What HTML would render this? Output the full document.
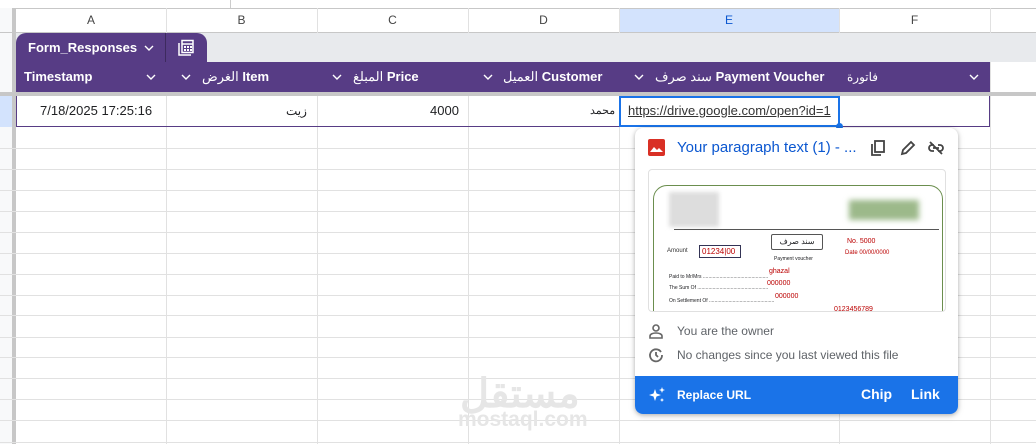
<!DOCTYPE html>
<html><head><meta charset="utf-8"><style>
*{margin:0;padding:0;box-sizing:border-box}
body{width:1036px;height:444px;overflow:hidden;background:#fff;font-family:"Liberation Sans","Noto Sans CJK SC",sans-serif;position:relative;font-size:13px;color:#202124}
.abs{position:absolute}
.vl{position:absolute;top:8px;bottom:0;width:1px;background:#e1e1e1}
.hl{position:absolute;left:0;right:0;height:1px;background:#e1e1e1}
.ch{position:absolute;top:9px;height:23px;line-height:23px;text-align:center;font-size:12px;color:#444}
.hd{position:absolute;top:62px;height:30px;line-height:30px;color:#fff;font-weight:bold;font-size:13px;white-space:nowrap}
.cv{position:absolute;top:74px;width:10px;height:6px}
</style></head><body>
<div class="hl" style="top:8px;background:#c7c7c7"></div>
<div class="abs" style="left:230px;top:0;width:1px;height:8px;background:#ccc"></div>
<div class="abs" style="left:0;top:8px;width:16px;height:436px;background:#f8f9fa"></div>
<div class="abs" style="left:12px;top:8px;width:4px;height:436px;background:#c7c7c7"></div>
<div class="abs" style="left:0;top:96px;width:12px;height:31px;background:#d3e3fd"></div>
<div class="abs" style="left:16px;top:9px;width:1020px;height:23px;background:#fff"></div>
<div class="abs" style="left:619px;top:9px;width:220px;height:23px;background:#d3e3fd"></div>
<div class="hl" style="top:32px;background:#c7c7c7"></div>
<div class="vl" style="left:166px"></div><div class="vl" style="left:317px"></div><div class="vl" style="left:468px"></div><div class="vl" style="left:619px"></div><div class="vl" style="left:839px"></div><div class="vl" style="left:990px"></div>
<div class="ch" style="left:16px;width:150px">A</div><div class="ch" style="left:166px;width:151px">B</div><div class="ch" style="left:317px;width:151px">C</div><div class="ch" style="left:468px;width:151px">D</div><div class="ch" style="left:619px;width:220px;color:#0b57d0">E</div><div class="ch" style="left:839px;width:151px">F</div>
<div class="hl" style="top:148px"></div><div class="hl" style="top:169px"></div><div class="hl" style="top:190px"></div><div class="hl" style="top:211px"></div><div class="hl" style="top:232px"></div><div class="hl" style="top:253px"></div><div class="hl" style="top:274px"></div><div class="hl" style="top:295px"></div><div class="hl" style="top:315px"></div><div class="hl" style="top:337px"></div><div class="hl" style="top:357px"></div><div class="hl" style="top:378px"></div><div class="hl" style="top:399px"></div><div class="hl" style="top:420px"></div><div class="hl" style="top:442px"></div>
<div class="abs" style="left:16px;top:33px;width:1020px;height:29px;background:#e8eaed"></div>
<div class="abs" style="left:16px;top:33px;width:191px;height:29px;background:#573c85;border-radius:10px 10px 0 0"></div>
<div class="abs" style="left:165px;top:33px;width:1px;height:29px;background:#3d2a5e"></div>
<div class="abs" style="left:28px;top:33px;line-height:29px;color:#fff;font-weight:bold;font-size:13px">Form_Responses</div>
<svg class="abs" style="left:144px;top:45px" width="10" height="6" fill="none" stroke="#fff" stroke-width="1.4"><path d="M1 1l4 4 4-4"/></svg>
<svg class="abs" style="left:177px;top:39px" width="18" height="18" viewBox="0 0 18 18" fill="none" stroke="#fff" stroke-width="1.5"><path d="M2 4v12h12"/><rect x="5" y="1.5" width="11" height="12"/><path d="M5 5h11"/><g fill="#fff" stroke="none"><rect x="7" y="7" width="2" height="2"/><rect x="10" y="7" width="2" height="2"/><rect x="13" y="7" width="2" height="2"/><rect x="7" y="10" width="2" height="2"/><rect x="10" y="10" width="2" height="2"/><rect x="13" y="10" width="2" height="2"/></g></svg>
<div class="abs" style="left:16px;top:62px;width:974px;height:30px;background:#573c85"></div>
<div class="hd" style="left:24px">Timestamp</div>
<div class="hd" style="left:202px"><span style="font-weight:normal">الغرض</span> Item</div>
<div class="hd" style="left:353px"><span style="font-weight:normal">المبلغ</span> Price</div>
<div class="hd" style="left:503px"><span style="font-weight:normal">العميل</span> Customer</div>
<div class="hd" style="left:655px"><span style="font-weight:normal">سند صرف</span> Payment Voucher</div>
<div class="hd" style="left:847px;font-weight:normal;font-size:12px">فاتورة</div>
<svg class="cv" style="left:146px" fill="none" stroke="#fff" stroke-width="1.4"><path d="M1 1l4 4 4-4"/></svg>
<svg class="cv" style="left:181px" fill="none" stroke="#fff" stroke-width="1.4"><path d="M1 1l4 4 4-4"/></svg>
<svg class="cv" style="left:332px" fill="none" stroke="#fff" stroke-width="1.4"><path d="M1 1l4 4 4-4"/></svg>
<svg class="cv" style="left:483px" fill="none" stroke="#fff" stroke-width="1.4"><path d="M1 1l4 4 4-4"/></svg>
<svg class="cv" style="left:634px" fill="none" stroke="#fff" stroke-width="1.4"><path d="M1 1l4 4 4-4"/></svg>
<svg class="cv" style="left:969px" fill="none" stroke="#fff" stroke-width="1.4"><path d="M1 1l4 4 4-4"/></svg>
<div class="abs" style="left:0;top:92px;width:1036px;height:4px;background:#c7c7c7"></div>
<div class="abs" style="left:16px;top:96px;width:974px;height:31px;border:1px solid #573c85;border-top:none;background:#fff"></div>
<div class="abs" style="left:166px;top:96px;width:1px;height:30px;background:#e1e1e1"></div><div class="abs" style="left:317px;top:96px;width:1px;height:30px;background:#e1e1e1"></div><div class="abs" style="left:468px;top:96px;width:1px;height:30px;background:#e1e1e1"></div><div class="abs" style="left:839px;top:96px;width:1px;height:30px;background:#e1e1e1"></div>
<div class="abs" style="left:40px;top:96px;line-height:30px">7/18/2025 17:25:16</div>
<div class="abs" style="left:286px;top:96px;line-height:30px;font-size:12px">زيت</div>
<div class="abs" style="left:430px;top:96px;line-height:30px">4000</div>
<div class="abs" style="left:590px;top:96px;line-height:30px;font-size:11px">محمد</div>
<div class="abs" style="left:619px;top:96px;width:221px;height:31px;border:2px solid #1a73e8"></div>
<div class="abs" style="left:628px;top:96px;line-height:30px;text-decoration:underline;color:#333;width:210px;overflow:hidden;white-space:nowrap">https://drive.google.com/open?id=1</div>
<div class="abs" style="left:836px;top:123px;width:7px;height:7px;border-radius:50%;background:#1a73e8"></div>
<div class="abs" style="left:635px;top:128px;width:323px;height:286px;background:#fff;border-radius:8px;box-shadow:0 1px 4px rgba(0,0,0,.25),0 2px 8px rgba(0,0,0,.1);overflow:hidden">
 <div class="abs" style="left:13px;top:11px;width:17px;height:17px;background:#d93025;border-radius:2px"></div>
 <svg class="abs" style="left:15px;top:16px" width="13" height="8"><path d="M0 8L4 3L7 6L9 4L13 8Z" fill="#fff"/></svg>
 <div class="abs" style="left:42px;top:11px;font-size:15px;color:#0b57d0;line-height:18px">Your paragraph text (1) - ...</div>
 <svg class="abs" style="left:234px;top:11px" width="18" height="18" fill="none" stroke="#444" stroke-width="1.8"><rect x="6" y="2" width="9" height="11"/><path d="M3 5v11h9"/></svg>
 <svg class="abs" style="left:264px;top:11px" width="18" height="18" fill="none" stroke="#444" stroke-width="1.8"><path d="M3 15l1-4L12 3l3 3-8 8z"/></svg>
 <svg class="abs" style="left:292px;top:11px" width="18" height="18" fill="none" stroke="#444" stroke-width="1.8"><path d="M7 6H5a3 3 0 000 6h2M11 6h2a3 3 0 010 6h-2M6 9h6M3 3l12 12"/></svg>
 <div class="abs" style="left:13px;top:41px;width:298px;height:143px;border:1px solid #e0e0e0;border-radius:4px;overflow:hidden;background:#fff">
  <div class="abs" style="left:4px;top:15px;width:290px;height:140px;border:1px solid #6b8e4e;border-radius:14px 14px 0 0"></div>
  <div class="abs" style="left:20px;top:22px;width:50px;height:35px;background:#ddd;filter:blur(2px)"></div>
  <div class="abs" style="left:200px;top:30px;width:70px;height:20px;background:#9cb98a;filter:blur(3px)"></div>
  <div class="abs" style="left:25px;top:59px;width:265px;height:1px;background:#555"></div>
  <div class="abs" style="left:122px;top:64px;width:52px;height:16px;border:1px solid #555;border-radius:2px;font-size:8px;text-align:center;line-height:14px">سند صرف</div>
  <div class="abs" style="left:18px;top:78px;font-size:6px;color:#333">Amount</div>
  <div class="abs" style="left:50px;top:75px;width:42px;height:13px;border:1px solid #335;font-size:8px;color:#b00;line-height:11px;padding-left:2px">01234|00</div>
  <div class="abs" style="left:198px;top:68px;font-size:7px;color:#b00">No. 5000</div>
  <div class="abs" style="left:196px;top:80px;font-size:6px;color:#b00">Date 00/00/0000</div>
  <div class="abs" style="left:125px;top:86px;font-size:5px">Payment voucher</div>
  <div class="abs" style="left:20px;top:104px;font-size:5px">Paid to Mr/Mrs ...............................................</div>
  <div class="abs" style="left:120px;top:98px;font-size:7px;color:#b00">ghazal</div>
  <div class="abs" style="left:20px;top:115px;font-size:5px">The Sum Of ...................................................</div>
  <div class="abs" style="left:118px;top:110px;font-size:7px;color:#b00">000000</div>
  <div class="abs" style="left:20px;top:128px;font-size:5px">On Settlement Of ...............................................</div>
  <div class="abs" style="left:126px;top:123px;font-size:7px;color:#b00">000000</div>
  <div class="abs" style="left:185px;top:136px;font-size:7px;color:#b00">0123456789</div>
 </div>
 <svg class="abs" style="left:13px;top:195px" width="16" height="16" fill="none" stroke="#666" stroke-width="1.6"><circle cx="8" cy="5" r="3"/><path d="M2 15v-2c0-2 3-3 6-3s6 1 6 3v2z"/></svg>
 <div class="abs" style="left:42px;top:196px;font-size:12px;color:#5f6368">You are the owner</div>
 <svg class="abs" style="left:13px;top:219px" width="16" height="16" fill="none" stroke="#666" stroke-width="1.8"><path d="M13 5A6 6 0 1 0 14 8"/><path d="M8 5v3l2 2"/></svg>
 <div class="abs" style="left:42px;top:220px;font-size:12px;color:#5f6368">No changes since you last viewed this file</div>
 <div class="abs" style="left:0;top:248px;width:323px;height:38px;background:#1a73e8"></div>
 <svg class="abs" style="left:13px;top:258px" width="18" height="18" fill="#fff"><path d="M7 3L8.5 7.5L13 9L8.5 10.5L7 15L5.5 10.5L1 9L5.5 7.5Z"/><path d="M14 1l.8 2.2L17 4l-2.2.8L14 7l-.8-2.2L11 4l2.2-.8z"/><path d="M14 12l.6 1.4L16 14l-1.4.6L14 16l-.6-1.4L12 14l1.4-.6z"/></svg>
 <div class="abs" style="left:42px;top:259px;font-size:12px;color:#fff;font-weight:bold;line-height:16px">Replace URL</div>
 <div class="abs" style="left:226px;top:258px;font-size:14px;color:#fff;font-weight:bold;line-height:17px">Chip</div>
 <div class="abs" style="left:276px;top:258px;font-size:14px;color:#fff;font-weight:bold;line-height:17px">Link</div>
</div>
<div class="abs" style="left:460px;top:372px;font-size:40px;font-weight:bold;color:#e6e6e6;line-height:44px">مستقل</div>
<div class="abs" style="left:458px;top:409px;font-size:21px;font-weight:bold;color:#e6e6e6;line-height:22px">mostaql.com</div>
</body></html>
